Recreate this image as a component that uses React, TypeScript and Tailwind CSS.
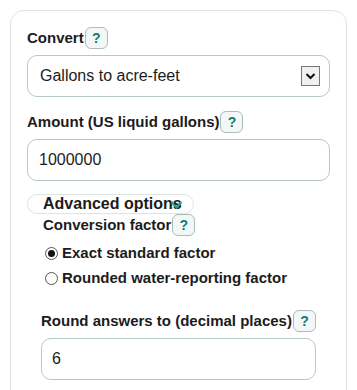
import React from "react";

function Help() {
  return (
    <span className="ml-px inline-flex h-[22px] w-[23px] shrink-0 items-center justify-center rounded-[6px] border border-[#a9bdb9] bg-[#f3f8f7] text-[14px] font-bold leading-none text-[#0e7c73]">
      ?
    </span>
  );
}

function Radio({ checked }: { checked?: boolean }) {
  return (
    <span className="flex h-[13px] w-[13px] items-center justify-center rounded-full border border-[#555] bg-white">
      {checked && <span className="h-[7px] w-[7px] rounded-full bg-[#111]" />}
    </span>
  );
}

export default function App() {
  return (
    <div className="h-[390px] overflow-hidden bg-white px-[10px] pt-[10px] font-['Liberation_Sans',Arial,sans-serif] text-[#1c1c1c]">
      <div className="h-[400px] rounded-[14px] border border-[#dde5e3] px-4 pt-4">
        <div className="flex h-[22px] items-center whitespace-nowrap">
          <span className="text-[15px] font-bold">Convert</span>
          <Help />
        </div>
        <div className="mt-[6px] flex h-[42px] items-center justify-between rounded-[10px] border border-[#b7c8c4] pl-[12px] pr-[9px]">
          <span className="text-[16px]">Gallons to acre-feet</span>
          <span className="flex h-[20px] w-[19px] items-center justify-center border border-[#767676] bg-[#f0f0f0]">
            <svg width="11" height="8" viewBox="0 0 11 8">
              <path d="M1.5 2 L5.5 6 L9.5 2" fill="none" stroke="#111" strokeWidth="2" />
            </svg>
          </span>
        </div>
        <div className="mt-[14px] flex h-[22px] items-center whitespace-nowrap">
          <span className="text-[15px] font-bold">Amount (US liquid gallons)</span>
          <Help />
        </div>
        <div className="mt-[6px] flex h-[42px] items-center rounded-[10px] border border-[#b7c8c4] pl-[11px]">
          <span className="text-[16px]">1000000</span>
        </div>
        <div className="relative mt-[13px] flex h-[20px] w-[167px] items-center whitespace-nowrap rounded-full border border-[#dde5e3] pl-[15px]">
          <span className="text-[16px] font-bold leading-none">Advanced options</span>
          <svg className="absolute left-[142px] top-[5px]" width="13" height="10" viewBox="0 0 13 10">
            <path d="M1.5 2 L6.5 7.5 L11.5 2" fill="none" stroke="#2a9a86" strokeWidth="2.2" />
          </svg>
        </div>
        <div className="px-[14px]">
          <div className="ml-[2px] flex h-[22px] items-center whitespace-nowrap">
            <span className="text-[15px] font-bold">Conversion factor</span>
            <Help />
          </div>
          <div className="ml-[4px] mt-[7px] flex flex-col gap-[5px]">
            <div className="flex h-[20px] items-center gap-[4px] whitespace-nowrap">
              <Radio checked />
              <span className="text-[15px] font-bold">Exact standard factor</span>
            </div>
            <div className="flex h-[20px] items-center gap-[4px] whitespace-nowrap">
              <Radio />
              <span className="text-[15px] font-bold">Rounded water-reporting factor</span>
            </div>
          </div>
          <div className="mt-[22px] flex h-[22px] items-center whitespace-nowrap">
            <span className="text-[15px] font-bold">Round answers to (decimal places)</span>
            <Help />
          </div>
          <div className="mt-[6px] flex h-[42px] items-center rounded-[10px] border border-[#b7c8c4] pl-[10px]">
            <span className="text-[16px]">6</span>
          </div>
        </div>
      </div>
    </div>
  );
}
